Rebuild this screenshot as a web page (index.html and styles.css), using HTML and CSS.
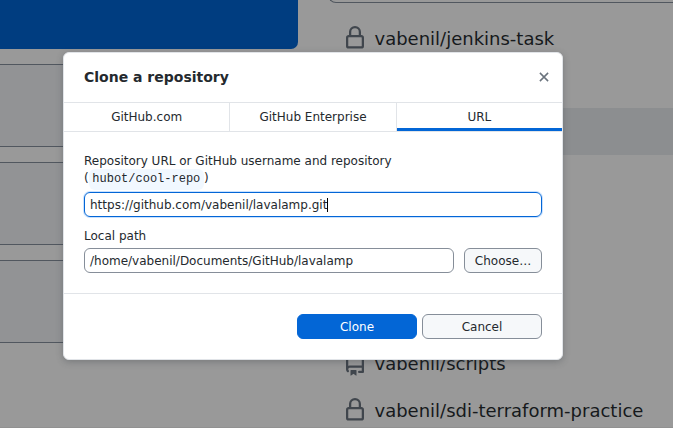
FILE: index.html
```html
<!DOCTYPE html>
<html lang="en">
<head>
<meta charset="utf-8">
<title>Clone a repository</title>
<link rel="stylesheet" href="styles.css">
</head>
<body>
<div class="app">
  <div class="backdrop">
    <section class="start">
      <div class="banner"></div>
      <div class="card"></div>
      <div class="card"></div>
      <div class="card"></div>
    </section>
    <section class="repos">
      <div class="filter"></div>
      <ul class="list">
        <li class="row"><svg class="icon" viewBox="0 0 16 16"><path d="M4 4a4 4 0 0 1 8 0v2h.25c.966 0 1.75.784 1.75 1.75v5.5A1.75 1.75 0 0 1 12.25 15h-8.5A1.75 1.75 0 0 1 2 13.25v-5.5C2 6.784 2.784 6 3.75 6H4Zm8.25 3.5h-8.5a.25.25 0 0 0-.25.25v5.5c0 .138.112.25.25.25h8.5a.25.25 0 0 0 .25-.25v-5.5a.25.25 0 0 0-.25-.25ZM10.5 6V4a2.5 2.5 0 1 0-5 0v2Z"/></svg><span>vabenil/jenkins-task</span></li>
        <li class="row"></li>
        <li class="row selected"></li>
        <li class="row"></li>
        <li class="row"></li>
        <li class="row"></li>
        <li class="row"></li>
        <li class="row"><svg class="icon" viewBox="0 0 16 16"><path d="M2 2.5A2.5 2.5 0 0 1 4.5 0h8.75a.75.75 0 0 1 .75.75v12.5a.75.75 0 0 1-.75.75h-2.5a.75.75 0 0 1 0-1.5h1.75v-2h-8a1 1 0 0 0-.714 1.7.75.75 0 1 1-1.072 1.05A2.495 2.495 0 0 1 2 11.5Zm10.5-1h-8a1 1 0 0 0-1 1v6.708A2.486 2.486 0 0 1 4.5 9h8ZM5 12.25a.25.25 0 0 1 .25-.25h3.5a.25.25 0 0 1 .25.25v3.25a.25.25 0 0 1-.4.2l-1.45-1.087a.249.249 0 0 0-.3 0L5.4 15.7a.25.25 0 0 1-.4-.2Z"/></svg><span>vabenil/scripts</span></li>
        <li class="row"><svg class="icon" viewBox="0 0 16 16"><path d="M4 4a4 4 0 0 1 8 0v2h.25c.966 0 1.75.784 1.75 1.75v5.5A1.75 1.75 0 0 1 12.25 15h-8.5A1.75 1.75 0 0 1 2 13.25v-5.5C2 6.784 2.784 6 3.75 6H4Zm8.25 3.5h-8.5a.25.25 0 0 0-.25.25v5.5c0 .138.112.25.25.25h8.5a.25.25 0 0 0 .25-.25v-5.5a.25.25 0 0 0-.25-.25ZM10.5 6V4a2.5 2.5 0 1 0-5 0v2Z"/></svg><span>vabenil/sdi-terraform-practice</span></li>
      </ul>
    </section>
  </div>
  <div class="dialog" role="dialog">
    <header class="head">
      <h1>Clone a repository</h1>
      <svg class="close" viewBox="0 0 10 10"><path d="M.9.9l8.200 8.200M9.100.9L.9 9.100"/></svg>
    </header>
    <nav class="tabs">
      <div class="tab">GitHub.com</div>
      <div class="tab">GitHub Enterprise</div>
      <div class="tab active">URL</div>
    </nav>
    <div class="form">
      <div class="label url-label">Repository URL or GitHub username and repository<br>(<code>hubot/cool-repo</code>)</div>
      <div class="input focused">https://github.com/vabenil/lavalamp.git<span class="caret"></span></div>
      <div class="label path-label">Local path</div>
      <div class="path">
        <div class="input">/home/vabenil/Documents/GitHub/lavalamp</div>
        <div class="button choose">Choose…</div>
      </div>
    </div>
    <footer class="foot">
      <div class="button primary">Clone</div>
      <div class="button">Cancel</div>
    </footer>
  </div>
</div>
</body>
</html>
```
FILE: styles.css
```css
* { box-sizing: border-box; }
body {
  margin: 0;
  overflow: hidden;
  font: 12px/18px "DejaVu Sans", sans-serif;
  color: #24292e;
}
.app {
  position: relative;
  width: 673px;
  height: 428px;
  overflow: hidden;
  background: #999;
}
.backdrop { display: flex; height: 428px; overflow: hidden; border-bottom: 1px solid #919191; }
.start { width: 298px; flex: none; }
.banner { height: 49px; margin-bottom: 15px; background: #003d80; border-radius: 0 0 7px 0; }
.card {
  height: 83px;
  margin-bottom: 15px;
  background: #929395;
  border: solid #51575f;
  border-width: 1px 1px 1px 0;
  border-radius: 0 7px 7px 0;
}
.repos { flex: 1; padding-left: 30px; }
.filter {
  height: 33px;
  margin-top: -30px;
  border: solid #51575f;
  border-width: 0 0 1px 1px;
  border-radius: 0 0 0 8px;
}
.list { list-style: none; margin: 12px 0 0; padding: 0; }
.row {
  display: flex;
  align-items: center;
  height: 46.5px;
  padding-left: 15px;
  gap: 7.5px;
  font-size: 18px;
  color: #16191c;
  white-space: nowrap;
}
.row span { padding-top: 1px; }
.selected { background: #8c8e90; }
.icon { width: 24px; height: 24px; flex: none; fill: #40464d; }
.dialog {
  position: absolute;
  left: 63px;
  top: 52px;
  width: 500px;
  height: 308px;
  background: #fff;
  border: 1px solid #e1e4e8;
  border-radius: 6px;
  box-shadow: 0 2px 7px rgba(47, 54, 61, .3);
}
.head {
  display: flex;
  align-items: center;
  justify-content: space-between;
  height: 49px;
  padding: 0 13px 2px 20px;
}
h1 { margin: 0; font-size: 14px; }
.close { width: 10px; height: 10px; fill: none; stroke: #6a737d; stroke-width: 1.5; }
.tabs {
  display: flex;
  height: 30px;
  border: solid #e1e4e8;
  border-width: 1px 0;
}
.tab { flex: 1; text-align: center; line-height: 28px; border-right: 1px solid #e1e4e8; }
.active { border-right: 0; box-shadow: inset 0 -3px #0366d6; }
.form { height: 161px; padding: 20px 20px 0; }
code {
  padding: 3px 3.6px 4px;
  font: 12px "Liberation Mono", monospace;
  background: #f1f8ff;
  border-radius: 6px;
}
.label { height: 36px; margin-bottom: 4px; }
.url-label { padding-top: 1px; line-height: 17px; }
.path-label { height: 18px; margin: 10px 0 3px; }
.input {
  flex: 1;
  height: 25px;
  padding: 0 5px;
  line-height: 25px;
  border: 1px solid #868e99;
  border-radius: 6px;
}
.focused { border-color: #0366d6; box-shadow: 0 0 0 1px #c8e1ff; }
.caret { display: inline-block; width: 1px; height: 14px; background: #000; vertical-align: -3px; }
.path { display: flex; gap: 10px; }
.button {
  width: 120px;
  height: 25px;
  text-align: center;
  line-height: 25px;
  background: #f6f8fa;
  border: 1px solid #868e99;
  border-radius: 6px;
}
.choose { width: 78px; }
.primary { color: #fff; background: #0366d6; border-color: #0366d6; }
.foot {
  display: flex;
  justify-content: flex-end;
  gap: 5px;
  height: 66px;
  padding: 20px 20px 0;
  border-top: 1px solid #e1e4e8;
}
```
